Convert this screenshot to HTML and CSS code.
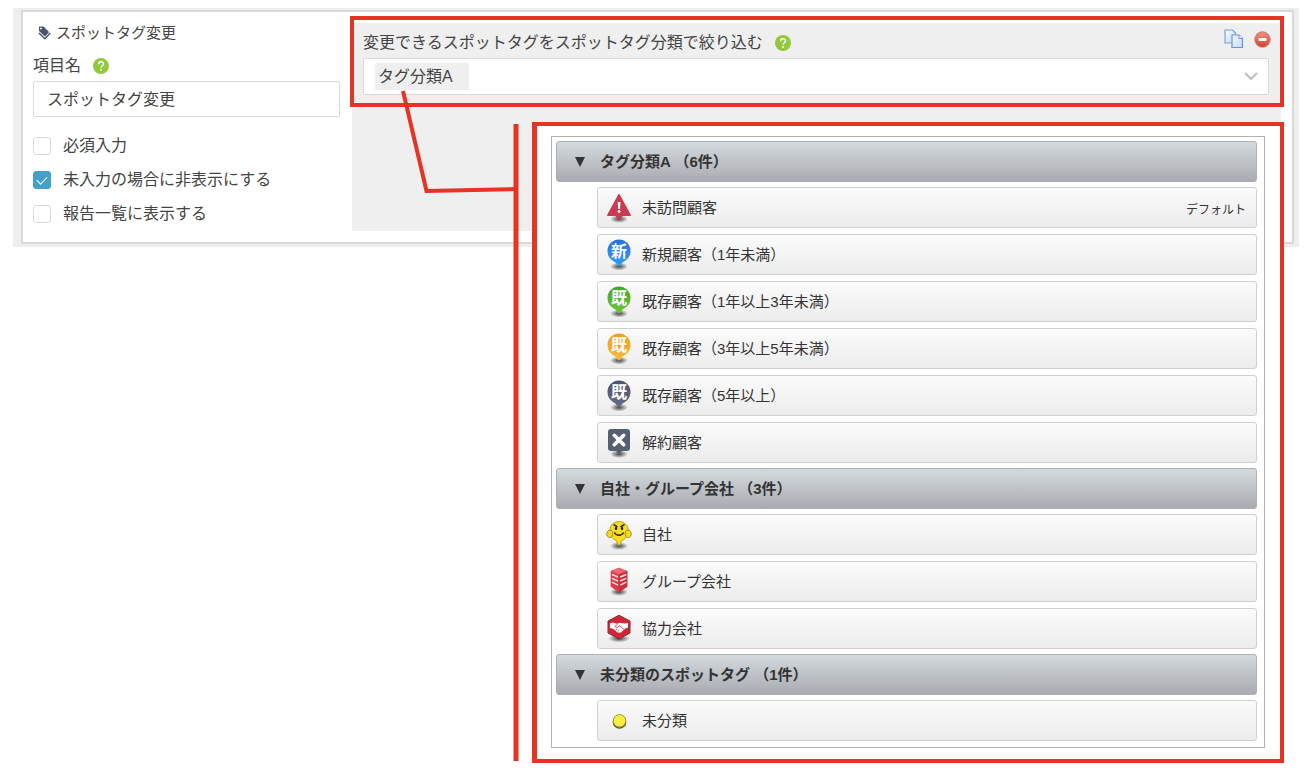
FILE: index.html
```html
<!DOCTYPE html>
<html lang="ja">
<head>
    <meta charset="UTF-8">
    <meta name="viewport" content="width=device-width, initial-scale=1.0">
    <title>スポットタグ変更</title>
    <link rel="stylesheet" href="styles.css">
</head>
<body>

    <!-- Shared icon shapes -->
    <svg class="icon-defs" width="0" height="0" aria-hidden="true">
        <defs>
            <radialGradient id="shadow">
                <stop offset="0" stop-color="#222" stop-opacity="0.85"/>
                <stop offset="1" stop-color="#222" stop-opacity="0"/>
            </radialGradient>
            <linearGradient id="blue" x1="0" y1="0" x2="0" y2="1">
                <stop offset="0" stop-color="#2a6fe0"/><stop offset="1" stop-color="#2fa0f4"/>
            </linearGradient>
            <linearGradient id="green" x1="0" y1="0" x2="0" y2="1">
                <stop offset="0" stop-color="#45a52b"/><stop offset="1" stop-color="#6cc932"/>
            </linearGradient>
            <linearGradient id="orange" x1="0" y1="0" x2="0" y2="1">
                <stop offset="0" stop-color="#eca02c"/><stop offset="1" stop-color="#fab932"/>
            </linearGradient>
            <linearGradient id="slate" x1="0" y1="0" x2="0" y2="1">
                <stop offset="0" stop-color="#4e526d"/><stop offset="1" stop-color="#686b87"/>
            </linearGradient>
            <linearGradient id="page" x1="0" y1="0" x2="1" y2="1">
                <stop offset="0" stop-color="#f4f9ff"/><stop offset="1" stop-color="#c4dbf8"/>
            </linearGradient>
            <linearGradient id="stop" x1="0" y1="0" x2="0" y2="1">
                <stop offset="0" stop-color="#ee9182"/><stop offset="1" stop-color="#d5422f"/>
            </linearGradient>
            <path id="pin" d="M13 0.5a11.5 11.5 0 0 1 11.5 11.5c0 6.500-4.500 9.500-8 11.500L13 28l-3.500-4.500C6 21.500 1.500 18.500 1.500 12A11.500 11.500 0 0 1 13 0.500z"/>
        </defs>
    </svg>

    <div class="stage">

        <!-- Item Settings Section -->
        <section class="settings">
            <div class="card">
                <form class="item-form">
                    <h1 class="item-title">
                        <svg width="13" height="14" viewBox="0 0 13 14" aria-hidden="true">
                            <path d="M1 0.500h4.500l5.500 5.500-4 4.500L1 5z" fill="#4c5168"/>
                            <circle cx="3" cy="2.500" r="0.900" fill="#fff"/>
                            <path d="M1 7l5.800 5.800L12.300 7" fill="none" stroke="#4c5168" stroke-width="1.500"/>
                            <path d="M1.500 5.800l5.400 5.400 4.800-4.700" fill="none" stroke="#c9ccd8" stroke-width="0.700"/>
                        </svg>
                        スポットタグ変更
                    </h1>
                    <div class="field-label">
                        <label for="item-name">項目名</label>
                        <svg class="help" viewBox="0 0 16 16" role="img" aria-label="ヘルプ">
                            <circle cx="8" cy="8" r="8" fill="#92c83e"/>
                            <path d="M5.600 6.200c0-3.300 4.900-3.200 4.900-0.300 0 1.800-2.400 1.900-2.400 3.800" fill="none" stroke="#fff" stroke-width="1.400"/>
                            <circle cx="8.100" cy="12" r="0.950" fill="#fff"/>
                        </svg>
                    </div>
                    <input type="text" id="item-name" class="text-input" value="スポットタグ変更">
                    <div class="checks">
                        <label class="check"><input type="checkbox">必須入力</label>
                        <label class="check"><input type="checkbox" checked>未入力の場合に非表示にする</label>
                        <label class="check"><input type="checkbox">報告一覧に表示する</label>
                    </div>
                </form>

                <div class="filter">
                    <div class="filter-head">
                        <div class="field-label">
                            <label for="tag-group">変更できるスポットタグをスポットタグ分類で絞り込む</label>
                            <svg class="help" viewBox="0 0 16 16" role="img" aria-label="ヘルプ">
                                <circle cx="8" cy="8" r="8" fill="#92c83e"/>
                                <path d="M5.600 6.200c0-3.300 4.900-3.200 4.900-0.300 0 1.800-2.400 1.900-2.400 3.800" fill="none" stroke="#fff" stroke-width="1.400"/>
                                <circle cx="8.100" cy="12" r="0.950" fill="#fff"/>
                            </svg>
                        </div>
                        <div class="actions">
                            <button type="button" class="icon-btn" aria-label="コピー">
                                <svg width="20" height="20" viewBox="0 0 20 20">
                                    <path d="M1 1h7.500l3 3v10H1z" fill="url(#page)" stroke="#7d9fd3" stroke-width="1.200"/>
                                    <path d="M8 6h7l3.500 3.500V18.500H8z" fill="url(#page)" stroke="#6e94cf" stroke-width="1.200"/>
                                    <path d="M15 6v3.500h3.500" fill="#fff" stroke="#6e94cf"/>
                                </svg>
                            </button>
                            <button type="button" class="icon-btn" aria-label="削除">
                                <svg width="17" height="17" viewBox="0 0 17 17">
                                    <circle cx="8.500" cy="8.500" r="7.700" fill="url(#stop)" stroke="#cf7264"/>
                                    <rect x="4.500" y="7" width="8" height="3" rx="0.800" fill="#fff"/>
                                </svg>
                            </button>
                        </div>
                    </div>
                    <div class="select-box">
                        <select id="tag-group">
                            <option>タグ分類A</option>
                            <option>自社・グループ会社</option>
                            <option>未分類のスポットタグ</option>
                        </select>
                        <svg class="chevron" width="14" height="9" viewBox="0 0 14 9" aria-hidden="true">
                            <path d="M1 1l6 6 6-6" fill="none" stroke="#bdbdbd" stroke-width="2"/>
                        </svg>
                    </div>
                </div>
            </div>
        </section>

        <!-- Tag List Section -->
        <section class="tag-popup">
            <div class="tag-list">
                <details open>
                    <summary><span class="arrow"></span>タグ分類A （6件）</summary>
                    <ul>
                        <li>
                            <svg class="tag-icon" viewBox="0 0 26 32">
                                <ellipse cx="13" cy="27" rx="9" ry="4" fill="url(#shadow)"/>
                                <path d="M13 3L24 23.200h-8L13 27l-3-3.800H2z" fill="#ca3b52" stroke="#ca3b52" stroke-width="1.800" stroke-linejoin="round"/>
                                <path d="M11.700 10h2.800l-0.500 7h-1.800z" fill="#fff"/>
                                <circle cx="13.100" cy="19.500" r="1.400" fill="#fff"/>
                            </svg>
                            <span class="tag-name">未訪問顧客</span>
                            <span class="tag-note">デフォルト</span>
                        </li>
                        <li>
                            <svg class="tag-icon" viewBox="0 0 26 32">
                                <ellipse cx="13" cy="27.500" rx="9" ry="4" fill="url(#shadow)"/>
                                <use href="#pin" fill="url(#blue)"/>
                                <text class="pin-text" x="13" y="18">新</text>
                            </svg>
                            <span class="tag-name">新規顧客（1年未満）</span>
                        </li>
                        <li>
                            <svg class="tag-icon" viewBox="0 0 26 32">
                                <ellipse cx="13" cy="27.500" rx="9" ry="4" fill="url(#shadow)"/>
                                <use href="#pin" fill="url(#green)"/>
                                <text class="pin-text" x="13" y="18">既</text>
                            </svg>
                            <span class="tag-name">既存顧客（1年以上3年未満）</span>
                        </li>
                        <li>
                            <svg class="tag-icon" viewBox="0 0 26 32">
                                <ellipse cx="13" cy="27.500" rx="9" ry="4" fill="url(#shadow)"/>
                                <use href="#pin" fill="url(#orange)"/>
                                <text class="pin-text" x="13" y="18">既</text>
                            </svg>
                            <span class="tag-name">既存顧客（3年以上5年未満）</span>
                        </li>
                        <li>
                            <svg class="tag-icon" viewBox="0 0 26 32">
                                <ellipse cx="13" cy="27.500" rx="9" ry="4" fill="url(#shadow)"/>
                                <use href="#pin" fill="url(#slate)"/>
                                <text class="pin-text" x="13" y="18">既</text>
                            </svg>
                            <span class="tag-name">既存顧客（5年以上）</span>
                        </li>
                        <li>
                            <svg class="tag-icon" viewBox="0 0 26 32">
                                <ellipse cx="13" cy="27" rx="9" ry="4" fill="url(#shadow)"/>
                                <path d="M5 2h16a3 3 0 0 1 3 3v16a3 3 0 0 1-3 3h-5l-3 3-3-3H5a3 3 0 0 1-3-3V5a3 3 0 0 1 3-3z" fill="#566071"/>
                                <path d="M8.300 8.300l9.400 9.400M17.700 8.300l-9.400 9.400" stroke="#fff" stroke-width="3.600" stroke-linecap="round"/>
                            </svg>
                            <span class="tag-name">解約顧客</span>
                        </li>
                    </ul>
                </details>
                <details open>
                    <summary><span class="arrow"></span>自社・グループ会社 （3件）</summary>
                    <ul>
                        <li>
                            <svg class="tag-icon" viewBox="0 0 26 32">
                                <ellipse cx="13" cy="27" rx="9" ry="4" fill="url(#shadow)"/>
                                <path d="M13 2.500c5.500 0 9.300 4 9.300 9.200 0 5-2.800 8.300-6.300 9.800L13 27l-3-5.500c-3.500-1.500-6.300-4.800-6.300-9.800C3.700 6.500 7.500 2.500 13 2.500z" fill="#f5dd22" stroke="#a69318" stroke-width="0.800"/>
                                <path d="M2.500 11.500c2-1 4.300 0 4.300 2.500s-1.300 5-3 4.600C1.800 18.200 0.300 16.500 0.700 14.500c0.200-1.300 1-2.300 1.800-3zM23.500 11.500c-2-1-4.300 0-4.300 2.500s1.300 5 3 4.600c2-0.400 3.500-2.100 3.100-4.100-0.200-1.300-1-2.300-1.800-3z" fill="#f2d81f" stroke="#917f18" stroke-width="0.800"/>
                                <path d="M7.500 5.500l4 2.300M18.500 5.500l-4 2.300" stroke="#2c2810" stroke-width="1.500"/>
                                <ellipse cx="10" cy="9.300" rx="1.200" ry="1.900" fill="#2c2810"/>
                                <ellipse cx="16" cy="9.300" rx="1.200" ry="1.900" fill="#2c2810"/>
                                <path d="M8.500 13.500c1.600 3.600 7.400 3.600 9 0" fill="none" stroke="#2c2810" stroke-width="1.500"/>
                            </svg>
                            <span class="tag-name">自社</span>
                        </li>
                        <li>
                            <svg class="tag-icon" viewBox="0 0 26 32">
                                <ellipse cx="13" cy="26" rx="9" ry="4" fill="url(#shadow)"/>
                                <path d="M13 1.800l8.300 3.200v15.500L13 26.500 4.700 20.500V5z" fill="#d93b49"/>
                                <path d="M13 1.800L21.300 5 13 8.200 4.700 5z" fill="#ec6670"/>
                                <path d="M13 8.200v18.300l8.300-6V5z" fill="#c62f40"/>
                                <path d="M6 8.500l6 2.500M6 12.300l6 2.700M6 16.200l6 3M14.200 11l6-2.500M14.200 15l6-2.700M14.200 19.200l6-3" stroke="#fbdfe1" stroke-width="1.400"/>
                            </svg>
                            <span class="tag-name">グループ会社</span>
                        </li>
                        <li>
                            <svg class="tag-icon" viewBox="0 0 26 32">
                                <ellipse cx="13" cy="25.500" rx="11" ry="4" fill="url(#shadow)"/>
                                <path d="M13 2.200L24 8v12l-11 6L2 20V8z" fill="#d32536" stroke="#71363e" stroke-linejoin="round"/>
                                <path d="M4 10.500l3-1 4 1.300 3-1 4 0.700 4-0.500v4.500l-2.700 1-4.300 4-3 0.300-5-4L4 15z" fill="#fff"/>
                                <path d="M11.500 11l-2.500 2.500 2.300 1 2.500-1.700 4 3.500M9.500 17l1.800-1.300M11.800 18.600l1.600-1.500" fill="none" stroke="#d32536" stroke-width="0.800"/>
                            </svg>
                            <span class="tag-name">協力会社</span>
                        </li>
                    </ul>
                </details>
                <details open>
                    <summary><span class="arrow"></span>未分類のスポットタグ （1件）</summary>
                    <ul>
                        <li>
                            <svg class="tag-icon" viewBox="0 0 26 32">
                                <circle cx="13.500" cy="17" r="6.800" fill="#5f5b22"/>
                                <circle cx="13.500" cy="15.800" r="6.200" fill="#fbee42" stroke="#a39a35"/>
                            </svg>
                            <span class="tag-name">未分類</span>
                        </li>
                    </ul>
                </details>
            </div>
        </section>

        <!-- Callout Lines -->
        <svg class="callout" width="120" height="680" viewBox="0 0 120 680" aria-hidden="true">
            <path d="M3 1l23.500 100 90-2" fill="none" stroke="#e53324" stroke-width="4"/>
            <path d="M116 34v637" stroke="#e53324" stroke-width="5"/>
        </svg>
    </div>

</body>
</html>
```

FILE: styles.css
```css
*,
*::before,
*::after {
    box-sizing: border-box;
}
body {
    font-family: "Liberation Sans", "Noto Sans CJK JP", sans-serif;
    font-size: 16px;
    line-height: 24px;
    background-color: #fff;
    color: #444;
    margin: 0;
}
.icon-defs {
    position: absolute;
}
.stage {
    position: relative;
    min-height: 100vh;
    padding: 8px 13px;
}
svg {
    display: block;
    flex-shrink: 0;
}

/* Item settings */
.settings {
    background-color: #eee;
    padding: 2px 5px 3px 8px;
}
.card {
    display: flex;
    gap: 12px;
    background-color: #fff;
    border: 2px solid #d9d9d9;
    padding: 9px 11px 11px 10px;
}
.item-form {
    flex: 0 0 307px;
    padding-bottom: 5px;
}
.item-title {
    display: flex;
    align-items: center;
    gap: 5px;
    margin: 0 0 9px;
    padding-left: 5px;
    font-size: 15px;
    font-weight: normal;
}
.field-label {
    display: flex;
    align-items: center;
    gap: 12px;
}
.help {
    width: 16px;
    height: 16px;
}
.text-input {
    display: block;
    width: 100%;
    height: 36px;
    margin-top: 3px;
    padding: 0 13px 2px;
    border: 1px solid #d9d9d9;
    border-radius: 2px;
    font: inherit;
    color: inherit;
}
.checks {
    display: flex;
    flex-direction: column;
    gap: 10px;
    margin-top: 17px;
}
.check {
    display: flex;
    align-items: center;
    gap: 12px;
}
.check input {
    appearance: none;
    width: 18px;
    height: 18px;
    margin: 0;
    border: 1px solid #d9d9d9;
    border-radius: 3px;
    background-color: #fff;
}
.check input:checked {
    display: grid;
    place-items: center;
    border-color: #449fc9;
    background-color: #449fc9;
}
.check input:checked::before {
    content: "";
    width: 10px;
    height: 6px;
    margin-bottom: 3px;
    border: solid #fff;
    border-width: 0 0 1px 1px;
    transform: rotate(-45deg);
}

/* Filter panel */
.filter {
    position: relative;
    flex: 1;
    margin-top: 2px;
    padding: 6px 12px 12px 11px;
    background-color: #efefef;
}
.filter::after {
    content: "";
    position: absolute;
    top: -7px;
    left: -2px;
    right: -3px;
    height: 91px;
    border: 4px solid #e53324;
    pointer-events: none;
}
.filter-head {
    display: flex;
    justify-content: space-between;
    align-items: flex-start;
}
.filter-head .field-label {
    padding: 2px 0 3px;
}
.actions {
    display: flex;
    align-items: center;
    gap: 10px;
    margin-right: -2px;
}
.icon-btn {
    padding: 0;
    border: 0;
    background: none;
    cursor: pointer;
}
.select-box {
    position: relative;
}
.select-box select {
    appearance: none;
    display: block;
    width: 100%;
    height: 37px;
    padding: 0 40px 0 14px;
    border: 1px solid #d9d9d9;
    border-radius: 2px;
    background: #fff linear-gradient(#efefef, #efefef) 11px 4px / 94px 27px no-repeat;
    font: inherit;
    color: inherit;
}
.chevron {
    position: absolute;
    top: 14px;
    right: 11px;
    pointer-events: none;
}

/* Tag list */
.tag-popup {
    position: absolute;
    top: 122px;
    left: 532px;
    right: 28px;
    padding: 10px 15px 11px 14px;
    border: 4px solid #e53324;
    border-left-width: 5px;
    background-color: #fff;
}
.tag-list {
    display: flex;
    flex-direction: column;
    gap: 5px;
    padding: 4px 7px 6px 4px;
    border: 1px solid #b0b0b0;
    color: #333;
    font-size: 15px;
}
summary {
    display: flex;
    align-items: center;
    gap: 15px;
    height: 41px;
    padding-left: 18px;
    border: 1px solid #adb1b5;
    border-radius: 3px;
    background: linear-gradient(#d4dadd, #a9abb1);
    font-weight: bold;
    cursor: pointer;
}
.arrow {
    border: solid transparent;
    border-width: 10px 5px 0;
    border-top-color: #333;
}
.tag-list ul {
    display: flex;
    flex-direction: column;
    gap: 6px;
    margin: 5px 0 0 41px;
    padding: 0;
    list-style: none;
}
.tag-list li {
    display: flex;
    align-items: center;
    gap: 10px;
    height: 41px;
    padding: 0 10px 0 8px;
    border: 1px solid #d0d0d0;
    border-radius: 3px;
    background: linear-gradient(#fbfbfb, #ececec);
}
.tag-icon {
    width: 26px;
    height: 32px;
}
.tag-name {
    flex: 1;
}
.tag-note {
    padding-top: 4px;
    font-size: 12px;
}
.pin-text {
    font-family: "Noto Sans CJK JP", sans-serif;
    font-size: 16px;
    font-weight: bold;
    fill: #fff;
    text-anchor: middle;
}

/* Callout lines over both sections */
.callout {
    position: absolute;
    top: 90px;
    left: 400px;
    pointer-events: none;
}
```
